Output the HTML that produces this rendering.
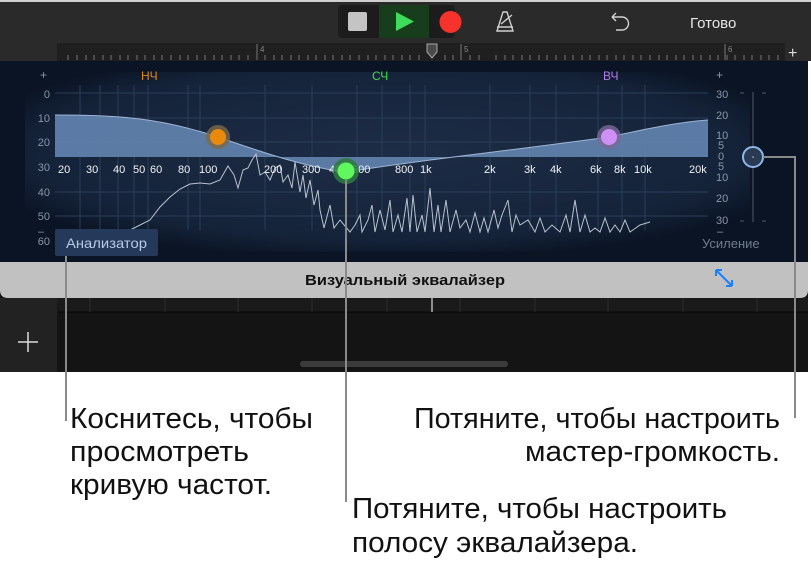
<!DOCTYPE html>
<html><head><meta charset="utf-8"><style>
html,body{margin:0;padding:0;background:#fff;width:811px;height:561px;overflow:hidden}
svg{display:block}
text{font-family:"Liberation Sans",sans-serif}
</style></head><body>
<svg width="811" height="561" viewBox="0 0 811 561" xmlns="http://www.w3.org/2000/svg">
<defs>
<radialGradient id="pg" cx="0.5" cy="0.45" r="0.6">
<stop offset="0" stop-color="#1d2d45"/><stop offset="0.8" stop-color="#15233a"/><stop offset="1" stop-color="#0a1424"/>
</radialGradient>
</defs>
<rect x="0" y="0" width="811" height="372" fill="#fff"/>
<rect x="0" y="0" width="811" height="43" fill="#2a2a2a"/>
<rect x="0" y="0" width="811" height="2" fill="#cfcfcf"/>
<rect x="338" y="5" width="117" height="33" rx="4" fill="#1c1c1c"/>
<rect x="379" y="5" width="50" height="33" fill="#173d1c"/>
<rect x="348" y="12" width="19" height="19" rx="2" fill="#c4c4c4"/>
<path d="M396 12 L414 21.5 L396 31 Z" fill="#3ddc5a"/>
<circle cx="451" cy="22" r="11" fill="#f5322c" transform="translate(-0.5 0)"/>
<g fill="none" stroke="#cfcfcf" stroke-width="1.4">
<path d="M497 31 L503 12 L507 12 L513 31 Z M497 27 L513 27 M501 24 L512 15"/>
<path d="M612 17 L622 17 A6.5 6.5 0 0 1 622 30 L616 30 M612 17 L616 13 M612 17 L616 21"/>
</g>
<text x="690" y="28" font-size="15" fill="#e6e6e6">Готово</text>
<rect x="0" y="43" width="811" height="18" fill="#2a2a2a"/>
<rect x="57" y="43" width="728" height="18" fill="#1f1f1f"/>
<g stroke="#777" stroke-width="1">
<path d="M68 55v5M77 55v5M86 55v5M94 55v5M103 55v5M111 55v5M120 55v5M128 55v5M137 55v5M145 55v5M154 55v5M162 55v5M171 55v5M180 55v5M188 55v5M197 55v5M205 55v5M214 55v5M222 55v5M231 55v5M239 55v5M248 55v5M265 55v5M274 55v5M282 55v5M291 55v5M299 55v5M308 55v5M316 55v5M325 55v5M333 55v5M342 55v5M350 55v5M359 55v5M368 55v5M376 55v5M385 55v5M393 55v5M402 55v5M410 55v5M419 55v5M445 55v5M453 55v5M470 55v5M479 55v5M496 55v5M505 55v5M513 55v5M522 55v5M530 55v5M539 55v5M547 55v5M556 55v5M565 55v5M573 55v5M582 55v5M590 55v5M599 55v5M607 55v5M616 55v5M624 55v5M633 55v5M641 55v5M650 55v5M659 55v5M667 55v5M676 55v5M684 55v5M693 55v5M701 55v5M710 55v5M718 55v5M727 55v5M735 55v5M744 55v5M752 55v5M761 55v5M769 55v5M778 55v5"/>
<path d="M257 44v16M461 44v16" />
</g>
<text x="260" y="52" font-size="8" fill="#888">4</text>
<text x="464" y="52" font-size="8" fill="#888">5</text>
<path d="M427 44 h10 v8 l-5 6 l-5 -6 z" fill="#4a4a4a" stroke="#aaa" stroke-width="1"/>
<path d="M725 44v16" stroke="#777"/><text x="728" y="52" font-size="8" fill="#888">6</text>
<text x="788" y="58" font-size="16" fill="#ddd">+</text>
<rect x="0" y="61" width="808" height="201" fill="#0a1424"/>
<rect x="25" y="72" width="725" height="180" fill="url(#pg)"/>
<g stroke="#2a3d58" stroke-width="1">
<path d="M55 93H708M55 118H708M55 142H708M55 192H708M55 216H708"/>
<path d="M80 85V230M100 85V230M118 85V230M134 85V230M148 85V230M188 85V230M200 85V230M265 85V230M312 85V230M357 85V230M382 85V230M410 85V230M425 85V230M490 85V230M530 85V230M556 85V230M598 85V230M622 85V230M645 85V230"/>
</g>
<path d="M55 115 C120 115 160 118 218 137 C270 155 310 168 346 172 C420 160 500 152 609 137 C650 128 680 122 708 120 L708 157 L55 157 Z" fill="#5f80ab" opacity="0.95"/>
<path d="M55 115 C120 115 160 118 218 137 C270 155 310 168 346 172 C420 160 500 152 609 137 C650 128 680 122 708 120" fill="none" stroke="#9fb6d4" stroke-width="1"/>
<polyline fill="none" stroke="#b8c2cf" stroke-width="1" points="130,230 140,225 150,220 160,207 170,197 180,189 190,184 200,183 210,184 220,180 228,166 234,175 238,188 243,170 248,168 252,160 256,154 260,175 265,172 270,180 275,168 280,165 283,182 288,175 292,188 295,162 300,192 303,175 306,198 310,180 314,205 318,190 320,210 324,228 330,205 334,228 340,220 350,232 355,225 360,215 362,232 368,220 372,205 375,232 380,210 385,230 390,200 393,232 398,215 402,232 407,198 410,232 413,195 417,232 422,215 425,232 430,188 434,232 438,205 441,232 446,200 450,232 456,210 460,228 466,220 470,232 475,213 480,232 484,218 488,232 494,210 498,228 502,215 508,200 512,232 516,215 520,225 528,220 535,232 540,218 545,232 552,225 560,232 566,215 570,232 575,200 580,232 585,215 590,232 595,228 600,232 605,218 610,232 615,225 620,232 625,220 630,232 640,225 650,222"/>
<g font-size="11" fill="#8896a8" text-anchor="end">
<text x="50" y="98">0</text><text x="50" y="122">10</text><text x="50" y="146">20</text><text x="50" y="171">30</text><text x="50" y="196">40</text><text x="50" y="220">50</text><text x="50" y="245">60</text>
</g>
<text x="40" y="79" font-size="12" fill="#8896a8">+</text>
<text x="38" y="235" font-size="11" fill="#8896a8">–</text>
<g font-size="11" fill="#8896a8">
<text x="716" y="98">30</text><text x="716" y="119">20</text><text x="716" y="139">10</text><text x="718" y="149">5</text><text x="718" y="160">0</text><text x="718" y="170">5</text><text x="716" y="181">10</text><text x="716" y="202">20</text><text x="716" y="224">30</text>
<text x="716" y="79" font-size="12">+</text><text x="717" y="235">–</text>
</g>
<text x="702" y="248" font-size="13" fill="#6f7c8c">Усиление</text>
<g stroke="#4c5a6c" stroke-width="1"><path d="M753 92V222M740 93h4M762 93h4M740 221h4M762 221h4"/></g>
<text x="141" y="80" font-size="12" fill="#e38a12">НЧ</text>
<text x="372" y="80" font-size="12" fill="#46d84a">СЧ</text>
<text x="603" y="80" font-size="12" fill="#b07ae6">ВЧ</text>
<g font-size="11" fill="#f0f2f5">
<text x="58" y="173">20</text><text x="86" y="173">30</text><text x="113" y="173">40</text><text x="133" y="173">50</text><text x="150" y="173">60</text><text x="178" y="173">80</text><text x="199" y="173">100</text><text x="264" y="173">200</text><text x="302" y="173">300</text><text x="329" y="173">400</text><text x="352" y="173">500</text><text x="395" y="173">800</text><text x="420" y="173">1k</text><text x="484" y="173">2k</text><text x="524" y="173">3k</text><text x="550" y="173">4k</text><text x="590" y="173">6k</text><text x="614" y="173">8k</text><text x="634" y="173">10k</text><text x="689" y="173">20k</text>
</g>
<circle cx="218" cy="137" r="12" fill="#7a6a4a" opacity="0.8"/><circle cx="218" cy="137" r="8" fill="#e98a0c"/>
<circle cx="609" cy="137" r="12" fill="#7a6a9a" opacity="0.8"/><circle cx="609" cy="137" r="8" fill="#cf90f5"/>
<circle cx="346" cy="171" r="13" fill="#2f7a40" opacity="0.85"/><circle cx="346" cy="171" r="8.5" fill="#5ff85f"/>
<circle cx="753" cy="157" r="10" fill="#2a3a52" stroke="#8fb8ea" stroke-width="2"/>
<circle cx="753" cy="157" r="0.8" fill="#ccc"/>
<rect x="55" y="229" width="103" height="27" rx="2" fill="#25395a"/>
<text x="66" y="248" font-size="14" fill="#b7cbe6" textLength="81" lengthAdjust="spacingAndGlyphs">Анализатор</text>
<rect x="0" y="262" width="808" height="110" fill="#141414"/>
<rect x="0" y="298" width="57" height="74" fill="#222"/>
<rect x="57" y="298" width="751" height="14" fill="#1a1a1a"/>
<path d="M57 312H808" stroke="#050505"/>
<g stroke="#2c2c2c"><path d="M90 298v14M165 298v14M238 298v14M312 298v14M387 298v14M460 298v14M535 298v14M608 298v14M683 298v14M757 298v14"/></g>
<path d="M432 298v14" stroke="#ddd" stroke-width="1.2"/>
<path d="M18 342h20M28 332v20" stroke="#ddd" stroke-width="1.5"/>
<rect x="300" y="361" width="208" height="6" rx="3" fill="#3b3b3b"/>
<path d="M0 262H808V290Q808 298 800 298H8Q0 298 0 290Z" fill="#c1c1c1"/>
<text x="405" y="285" font-size="15" fill="#111" text-anchor="middle" textLength="200" lengthAdjust="spacingAndGlyphs" style="font-weight:600">Визуальный эквалайзер</text>
<g stroke="#1a80ff" stroke-width="2" fill="none">
<path d="M716 270l16 16M716 270v6M716 270h6M732 286v-6M732 286h-6"/>
</g>
<g stroke="#8a8a8a" stroke-width="2" fill="none">
<path d="M66 256V421"/>
<path d="M346 180V502"/>
<path d="M763 157H795V418"/>
</g>
<g font-size="29" fill="#111">
<text x="70" y="428" textLength="243" lengthAdjust="spacingAndGlyphs">Коснитесь, чтобы</text>
<text x="70" y="461" textLength="179" lengthAdjust="spacingAndGlyphs">просмотреть</text>
<text x="70" y="494" textLength="202" lengthAdjust="spacingAndGlyphs">кривую частот.</text>
<text x="414" y="428" textLength="366" lengthAdjust="spacingAndGlyphs">Потяните, чтобы настроить</text>
<text x="525" y="461" textLength="255" lengthAdjust="spacingAndGlyphs">мастер-громкость.</text>
<text x="352" y="518" textLength="375" lengthAdjust="spacingAndGlyphs">Потяните, чтобы настроить</text>
<text x="352" y="552" textLength="286" lengthAdjust="spacingAndGlyphs">полосу эквалайзера.</text>
</g>
</svg>
</body></html>
